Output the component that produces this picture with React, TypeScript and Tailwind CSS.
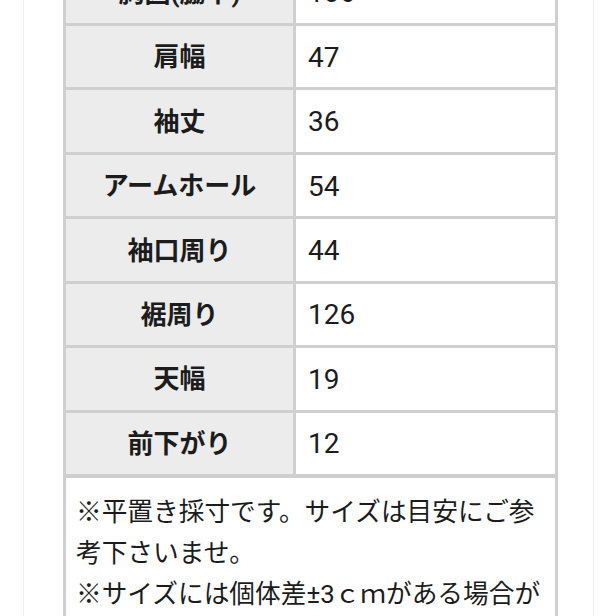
const rows: [string, string][] = [
  ["胸囲(脇下)", "106"],
  ["肩幅", "47"],
  ["袖丈", "36"],
  ["アームホール", "54"],
  ["袖口周り", "44"],
  ["裾周り", "126"],
  ["天幅", "19"],
  ["前下がり", "12"],
];

export default function App() {
  return (
    <div className="w-[616px] h-[616px] overflow-hidden bg-white font-['Roboto','Noto_Sans_CJK_JP',sans-serif] text-[#1c1c1c]">
      <div className="ml-[23px] w-[571px] h-full border-x border-[#f1f1f1] flex flex-col">
        <div className="ml-[39px] w-[495px] -mt-[41.4px]">
          <div className="flex flex-col gap-[3px] bg-[#cfcfcf] p-[3px] pb-[4px]">
            {rows.map(([label, value]) => (
              <div key={label} className="flex h-[61.43px] gap-[3px]">
                <div className="w-[227px] bg-[#ececec] flex items-center justify-center font-bold text-[26px] pt-[2px]">
                  {label}
                </div>
                <div className="flex-1 bg-white flex items-center pl-[12px] text-[28px] pt-[2px]">
                  {value}
                </div>
              </div>
            ))}
          </div>
          <div className="border-x-[3px] border-[#cfcfcf] bg-white h-[200px] pl-[10px] pt-[14px] text-[25.7px] leading-[41px]">
            ※平置き採寸です。サイズは目安にご参
            <br />
            考下さいませ。
            <br />
            ※サイズには個体差±3ｃｍがある場合が
          </div>
        </div>
      </div>
    </div>
  );
}
